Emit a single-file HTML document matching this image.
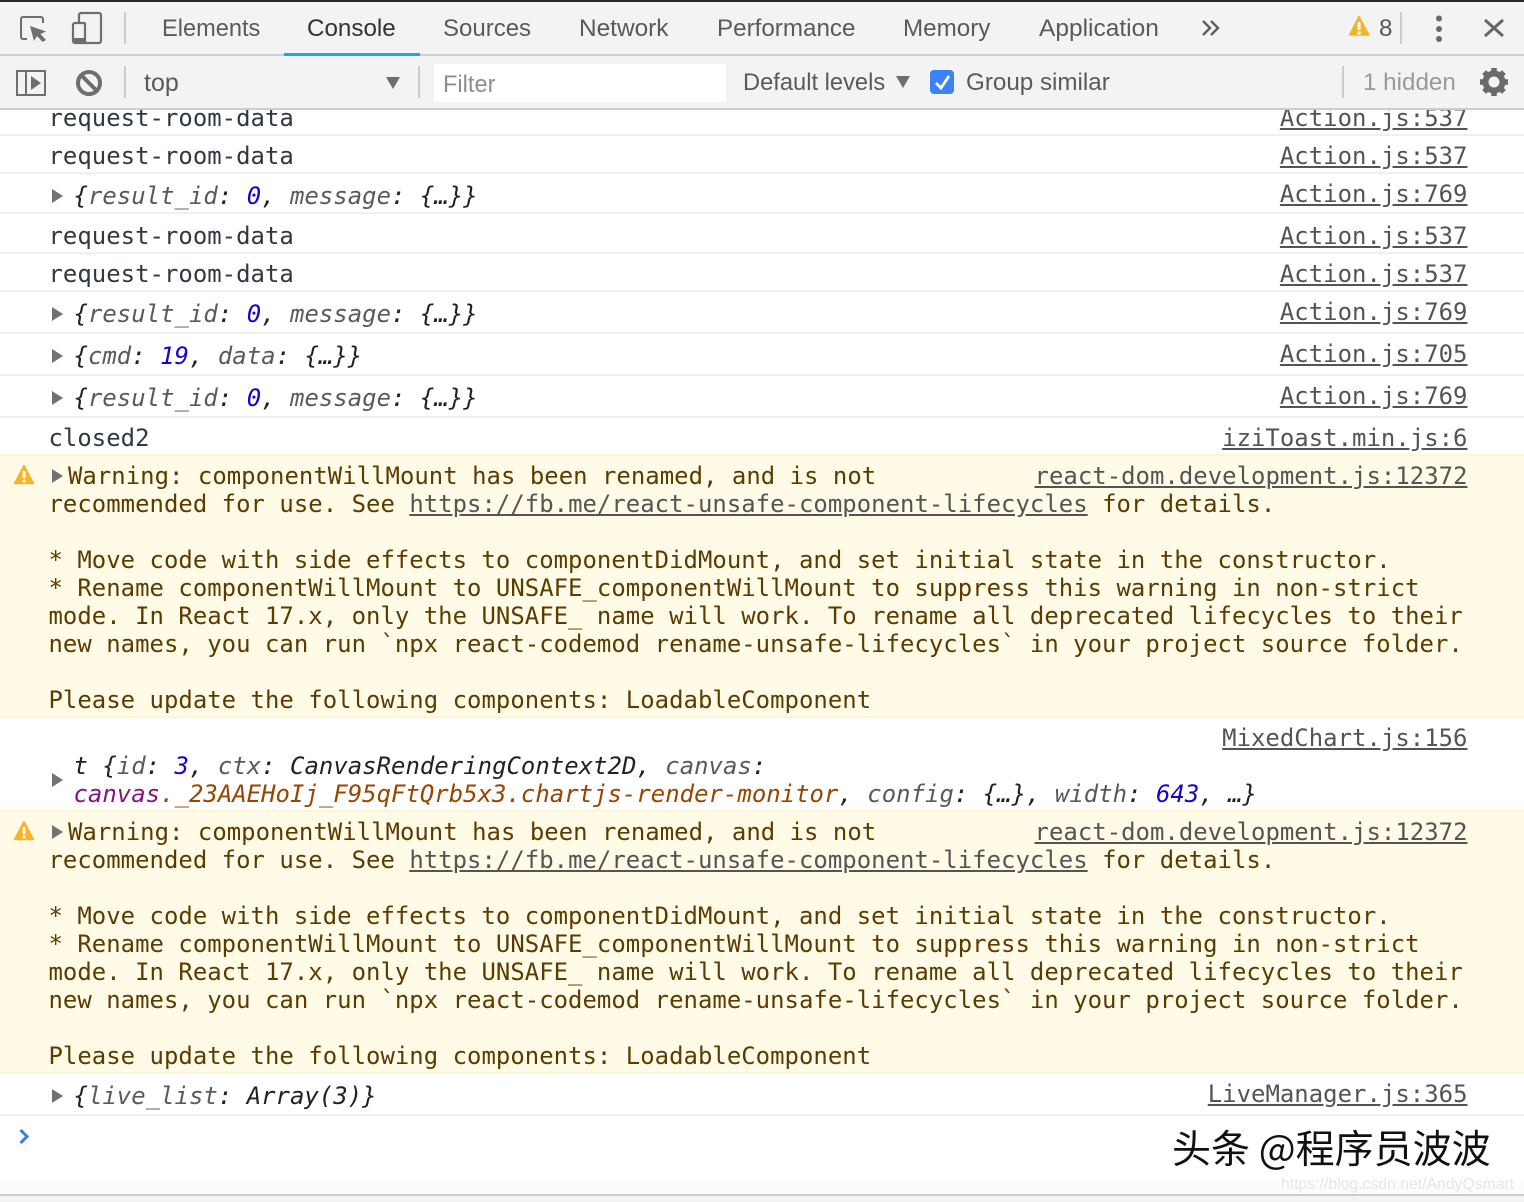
<!DOCTYPE html>
<html><head><meta charset="utf-8">
<style>
html,body{margin:0;padding:0;background:#fff}
#p{position:relative;width:1524px;height:1202px;overflow:hidden;background:#fff}
.a{position:absolute}
.s{position:absolute;font:24.2px/28px "Liberation Sans",sans-serif;color:#5a5a5a;white-space:pre}
.m{position:absolute;font:23.93px/28px "DejaVu Sans Mono",monospace;letter-spacing:.03px;color:#303942;white-space:pre;left:48.5px}
.w{color:#5c3b00}
.o{font-style:italic;color:#222;left:73.5px}
.k{color:#5a5a5a}.n{color:#1c00cf}
.l{position:absolute;font:23.93px/28px "DejaVu Sans Mono",monospace;letter-spacing:.03px;color:#545454;text-decoration:underline;white-space:pre;right:56.5px}
.b{position:absolute;left:0;width:1524px;height:2px;background:#f0f0f0}
.y{background:#fff5d6}
.sep{position:absolute;width:2px;background:#ccc}
.t{position:absolute;left:52px;width:0;height:0;border-left:11px solid #727272;border-top:7px solid transparent;border-bottom:7px solid transparent}
svg{position:absolute;overflow:visible}
</style></head><body><div id="p">

<div class="a" style="left:0;top:0;width:1524px;height:2px;background:#292929"></div>
<div class="a" style="left:0;top:2px;width:1524px;height:52px;background:#f3f3f3"></div>
<div class="a" style="left:0;top:54px;width:1524px;height:2px;background:#cdcdcd"></div>
<div class="a" style="left:0;top:56px;width:1524px;height:52px;background:#f3f3f3"></div>
<div class="a" style="left:0;top:108px;width:1524px;height:2px;background:#cdcdcd"></div>
<div class="a" style="left:284px;top:53px;width:136px;height:3px;background:#1ea5ea"></div>

<svg style="left:0;top:0" width="130" height="110">
<path d="M27 39H23a2 2 0 0 1-2-2V19a2 2 0 0 1 2-2H41a2 2 0 0 1 2 2V23" fill="none" stroke="#6e6e6e" stroke-width="2"/>
<path d="M30 26L46 31.500L40.500 34L46 40L42.500 42L37 36L34 41Z" fill="#6e6e6e"/>
<path d="M79 24V15a2 2 0 0 1 2-2H99a2 2 0 0 1 2 2V41a2 2 0 0 1-2 2H75a2 2 0 0 1-2-2V25a2 2 0 0 1 2-2H84a1 1 0 0 1 1 1V43" fill="none" stroke="#6e6e6e" stroke-width="2.200"/>
<rect x="73" y="38" width="12" height="5" fill="#6e6e6e"/>
<rect x="17" y="71" width="28" height="24" fill="none" stroke="#6e6e6e" stroke-width="2"/>
<rect x="25" y="71" width="2" height="24" fill="#6e6e6e"/>
<path d="M31 76L41 83L31 90Z" fill="#6e6e6e"/>
<circle cx="89" cy="83" r="11" fill="none" stroke="#6e6e6e" stroke-width="4"/>
<path d="M81 75L97 91" stroke="#6e6e6e" stroke-width="4"/>
</svg>
<div class="sep" style="left:124px;top:12px;height:32px"></div>
<div class="sep" style="left:124px;top:66px;height:32px"></div>
<div class="sep" style="left:418px;top:66px;height:32px"></div>
<div class="sep" style="left:1342px;top:66px;height:32px"></div>
<div class="sep" style="left:1400px;top:12px;height:32px"></div>

<div class="s" style="left:162px;top:15px;font-size:23.6px">Elements</div>
<div class="s" style="left:307px;top:15px;color:#333">Console</div>
<div class="s" style="left:443px;top:15px;font-size:24px">Sources</div>
<div class="s" style="left:579px;top:15px;font-size:24.4px">Network</div>
<div class="s" style="left:717px;top:15px">Performance</div>
<div class="s" style="left:903px;top:15px">Memory</div>
<div class="s" style="left:1039px;top:15px;font-size:24.5px">Application</div>
<svg style="left:0;top:0" width="1524" height="110">
<path d="M1203 21L1210 28L1203 35M1211 21L1218 28L1211 35" fill="none" stroke="#5f5f5f" stroke-width="2.400"/>
<path d="M1359 16.500L1369 35H1349.500Z" fill="#f4b42c" stroke="#f4b42c" stroke-width="1.500" stroke-linejoin="round"/>
<rect x="1357.600" y="22" width="3" height="8" fill="#fff"/><rect x="1357.600" y="31.500" width="3" height="3" fill="#fff"/>
<circle cx="1439" cy="18.500" r="3" fill="#6a6a6a"/><circle cx="1439" cy="29" r="3" fill="#6a6a6a"/><circle cx="1439" cy="39" r="3" fill="#6a6a6a"/>
<path d="M1485 20L1503 36M1503 20L1485 36" stroke="#666" stroke-width="3"/>
<path d="M386 77H400L393 89Z" fill="#6e6e6e"/>
<path d="M896 76H910L903 88Z" fill="#6e6e6e"/>
<rect x="930" y="70" width="24" height="24" rx="4" fill="#3b82f6"/>
<path d="M936 83L941 88L949 76" fill="none" stroke="#fff" stroke-width="2.800"/>
<circle cx="1494" cy="82" r="8.500" fill="none" stroke="#6a6a6a" stroke-width="6"/>
<g stroke="#6a6a6a" stroke-width="5.500"><path d="M1494 68V74M1494 90V96M1480 82H1486M1502 82H1508M1484.100 72.100L1488.300 76.300M1499.700 87.700L1503.900 91.900M1503.900 72.100L1499.700 76.300M1488.300 87.700L1484.100 91.900"/></g>
</svg>
<div class="s" style="left:1379px;top:15px">8</div>
<div class="s" style="left:144px;top:69px;font-size:25px">top</div>
<div class="a" style="left:434px;top:64px;width:292px;height:38px;background:#fff"></div>
<div class="s" style="left:443px;top:71px;color:#8e8e8e;font-size:23.6px">Filter</div>
<div class="s" style="left:743px;top:69px;font-size:23.7px">Default levels</div>
<div class="s" style="left:966px;top:69px">Group similar</div>
<div class="s" style="left:1363px;top:69px;color:#9a9a9a">1 hidden</div>

<div class="b" style="top:134px"></div><div class="b" style="top:172px"></div><div class="b" style="top:212px"></div><div class="b" style="top:252px"></div><div class="b" style="top:290px"></div><div class="b" style="top:332px"></div><div class="b" style="top:374px"></div><div class="b" style="top:416px"></div>

<div class="a" style="left:0;top:110px;width:1524px;height:24px;overflow:hidden">
<div class="m" style="top:-6px">request-room-data</div>
<div class="l" style="top:-6px">Action.js:537</div>
</div>
<div class="m" style="top:142px">request-room-data</div><div class="l" style="top:142px">Action.js:537</div>
<div class="t" style="top:189px"></div>
<div class="m o" style="top:182px">{<span class="k">result_id</span>: <span class="n">0</span>, <span class="k">message</span>: {…}}</div><div class="l" style="top:180px">Action.js:769</div>
<div class="m" style="top:222px">request-room-data</div><div class="l" style="top:222px">Action.js:537</div>
<div class="m" style="top:260px">request-room-data</div><div class="l" style="top:260px">Action.js:537</div>
<div class="t" style="top:307px"></div>
<div class="m o" style="top:300px">{<span class="k">result_id</span>: <span class="n">0</span>, <span class="k">message</span>: {…}}</div><div class="l" style="top:298px">Action.js:769</div>
<div class="t" style="top:349px"></div>
<div class="m o" style="top:342px">{<span class="k">cmd</span>: <span class="n">19</span>, <span class="k">data</span>: {…}}</div><div class="l" style="top:340px">Action.js:705</div>
<div class="t" style="top:391px"></div>
<div class="m o" style="top:384px">{<span class="k">result_id</span>: <span class="n">0</span>, <span class="k">message</span>: {…}}</div><div class="l" style="top:382px">Action.js:769</div>
<div class="m" style="top:424px">closed2</div><div class="l" style="top:424px">iziToast.min.js:6</div>

<div class="a" style="left:0;top:454px;width:1524px;height:264px;background:#fffbe6;border-top:0"></div>
<div class="b y" style="top:454px"></div><div class="b y" style="top:716px"></div>
<svg style="left:0;top:0" width="40" height="860">
<path d="M24 465.500L33.500 483.500H14.500Z" fill="#f4b42c" stroke="#f4b42c" stroke-width="1.500" stroke-linejoin="round"/><rect x="22.700" y="471" width="2.800" height="7" fill="#fff"/><rect x="22.700" y="479.500" width="2.800" height="2.800" fill="#fff"/>
</svg>
<div class="t" style="top:469px"></div>
<div class="m w" style="top:462px;left:68px">Warning: componentWillMount has been renamed, and is not</div>
<div class="l" style="top:462px">react-dom.development.js:12372</div>
<div class="m w" style="top:490px">recommended for use. See <span style="color:#545454;text-decoration:underline">https://fb.me/react-unsafe-component-lifecycles</span> for details.</div>
<div class="m w" style="top:546px">* Move code with side effects to componentDidMount, and set initial state in the constructor.</div>
<div class="m w" style="top:574px">* Rename componentWillMount to UNSAFE_componentWillMount to suppress this warning in non-strict</div>
<div class="m w" style="top:602px">mode. In React 17.x, only the UNSAFE_ name will work. To rename all deprecated lifecycles to their</div>
<div class="m w" style="top:630px">new names, you can run `npx react-codemod rename-unsafe-lifecycles` in your project source folder.</div>
<div class="m w" style="top:686px">Please update the following components: LoadableComponent</div>

<div class="l" style="top:724px">MixedChart.js:156</div>
<div class="t" style="top:773px"></div>
<div class="m o" style="top:752px">t {<span class="k">id</span>: <span class="n">3</span>, <span class="k">ctx</span>: CanvasRenderingContext2D, <span class="k">canvas</span>:</div>
<div class="m o" style="top:780px"><span style="color:#881280">canvas</span><span style="color:#994500">._23AAEHoIj_F95qFtQrb5x3.chartjs-render-monitor</span>, <span class="k">config</span>: {…}, <span class="k">width</span>: <span class="n">643</span>, …}</div>

<div class="a" style="left:0;top:810px;width:1524px;height:264px;background:#fffbe6"></div>
<div class="b y" style="top:810px"></div><div class="b y" style="top:1072px"></div>
<svg style="left:0;top:0" width="40" height="860">
<path d="M24 821.500L33.500 839.500H14.500Z" fill="#f4b42c" stroke="#f4b42c" stroke-width="1.500" stroke-linejoin="round"/><rect x="22.700" y="827" width="2.800" height="7" fill="#fff"/><rect x="22.700" y="835.500" width="2.800" height="2.800" fill="#fff"/>
</svg>
<div class="t" style="top:825px"></div>
<div class="m w" style="top:818px;left:68px">Warning: componentWillMount has been renamed, and is not</div>
<div class="l" style="top:818px">react-dom.development.js:12372</div>
<div class="m w" style="top:846px">recommended for use. See <span style="color:#545454;text-decoration:underline">https://fb.me/react-unsafe-component-lifecycles</span> for details.</div>
<div class="m w" style="top:902px">* Move code with side effects to componentDidMount, and set initial state in the constructor.</div>
<div class="m w" style="top:930px">* Rename componentWillMount to UNSAFE_componentWillMount to suppress this warning in non-strict</div>
<div class="m w" style="top:958px">mode. In React 17.x, only the UNSAFE_ name will work. To rename all deprecated lifecycles to their</div>
<div class="m w" style="top:986px">new names, you can run `npx react-codemod rename-unsafe-lifecycles` in your project source folder.</div>
<div class="m w" style="top:1042px">Please update the following components: LoadableComponent</div>

<div class="t" style="top:1089px"></div>
<div class="m o" style="top:1082px">{<span class="k">live_list</span>: Array(3)}</div><div class="l" style="top:1080px">LiveManager.js:365</div>
<div class="b" style="top:1114px"></div>
<svg style="left:0;top:0" width="40" height="1160"><path d="M20.500 1130L27 1136.500L20.500 1143" fill="none" stroke="#3a7df0" stroke-width="3"/></svg>

<div class="a" style="left:0;top:1176px;width:1524px;height:18px;background:linear-gradient(#fff,#fbfbfb)"></div>
<div class="a" style="left:1172px;top:1122px;font:39px/50px 'Noto Sans CJK SC','Liberation Sans',sans-serif;color:#111;white-space:pre;text-shadow:-1px -1px 0 #fff">头条 @程序员波波</div>
<div class="a" style="left:1281px;top:1175px;font:15.77px/20px 'Liberation Sans',sans-serif;color:#e6e6e6;white-space:pre">https://blog.csdn.net/AndyQsmart</div>
<div class="a" style="left:0;top:1194px;width:1524px;height:2px;background:#cdcdcd"></div>
<div class="a" style="left:0;top:1196px;width:1524px;height:6px;background:#f3f3f3"></div>
</div></body></html>
